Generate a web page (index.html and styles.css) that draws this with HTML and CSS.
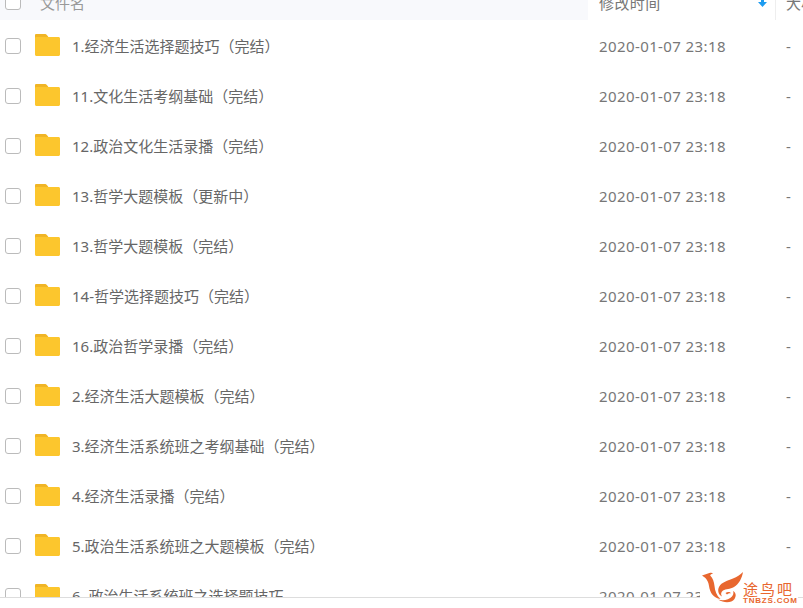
FILE: index.html
```html
<!DOCTYPE html>
<html lang="zh-CN">
<head>
    <meta charset="UTF-8">
    <title>文件列表</title>
    <link rel="stylesheet" href="styles.css">
</head>
<body>
    <svg class="defs" width="0" height="0">
        <symbol id="folder" viewBox="0 0 25 22">
            <path d="M1.500 0h8c1 0 1.600.4 2.200 1l1.600 2h10.200c.8 0 1.500.7 1.500 1.500v16c0 .8-.7 1.500-1.500 1.500h-22C.7 22 0 21.300 0 20.500v-19C0 .7.7 0 1.500 0z" fill="#fcc62d"/>
            <path d="M1.500 0h8c1 0 1.600.4 2.200 1l1.600 2H1.500C.7 3 0 3.500 0 4V1.500C0 .7.7 0 1.500 0z" fill="#f0b526"/>
        </symbol>
    </svg>
    <main class="file-list">
        <div class="list-head">
            <div class="col-name head-name">
                <span class="check"></span>
                <span class="head-label">文件名</span>
            </div>
            <div class="col-time head-time">
                <span>修改时间</span>
                <svg class="sort-arrow" width="9" height="9" viewBox="0 0 9 9"><path d="M3 0h3v4h3L4.500 9 0 4h3z" fill="#1e9cf0"/></svg>
            </div>
            <div class="col-size head-size"><span>大小</span></div>
        </div>
        <div class="row">
            <div class="col-name"><span class="check"></span><svg class="folder"><use href="#folder"/></svg><span class="name">1.经济生活选择题技巧（完结）</span></div>
            <div class="col-time"><span>2020-01-07 23:18</span></div>
            <div class="col-size"><span>-</span></div>
        </div>
        <div class="row">
            <div class="col-name"><span class="check"></span><svg class="folder"><use href="#folder"/></svg><span class="name">11.文化生活考纲基础（完结）</span></div>
            <div class="col-time"><span>2020-01-07 23:18</span></div>
            <div class="col-size"><span>-</span></div>
        </div>
        <div class="row">
            <div class="col-name"><span class="check"></span><svg class="folder"><use href="#folder"/></svg><span class="name">12.政治文化生活录播（完结）</span></div>
            <div class="col-time"><span>2020-01-07 23:18</span></div>
            <div class="col-size"><span>-</span></div>
        </div>
        <div class="row">
            <div class="col-name"><span class="check"></span><svg class="folder"><use href="#folder"/></svg><span class="name">13.哲学大题模板（更新中）</span></div>
            <div class="col-time"><span>2020-01-07 23:18</span></div>
            <div class="col-size"><span>-</span></div>
        </div>
        <div class="row">
            <div class="col-name"><span class="check"></span><svg class="folder"><use href="#folder"/></svg><span class="name">13.哲学大题模板（完结）</span></div>
            <div class="col-time"><span>2020-01-07 23:18</span></div>
            <div class="col-size"><span>-</span></div>
        </div>
        <div class="row">
            <div class="col-name"><span class="check"></span><svg class="folder"><use href="#folder"/></svg><span class="name">14-哲学选择题技巧（完结）</span></div>
            <div class="col-time"><span>2020-01-07 23:18</span></div>
            <div class="col-size"><span>-</span></div>
        </div>
        <div class="row">
            <div class="col-name"><span class="check"></span><svg class="folder"><use href="#folder"/></svg><span class="name">16.政治哲学录播（完结）</span></div>
            <div class="col-time"><span>2020-01-07 23:18</span></div>
            <div class="col-size"><span>-</span></div>
        </div>
        <div class="row">
            <div class="col-name"><span class="check"></span><svg class="folder"><use href="#folder"/></svg><span class="name">2.经济生活大题模板（完结）</span></div>
            <div class="col-time"><span>2020-01-07 23:18</span></div>
            <div class="col-size"><span>-</span></div>
        </div>
        <div class="row">
            <div class="col-name"><span class="check"></span><svg class="folder"><use href="#folder"/></svg><span class="name">3.经济生活系统班之考纲基础（完结）</span></div>
            <div class="col-time"><span>2020-01-07 23:18</span></div>
            <div class="col-size"><span>-</span></div>
        </div>
        <div class="row">
            <div class="col-name"><span class="check"></span><svg class="folder"><use href="#folder"/></svg><span class="name">4.经济生活录播（完结）</span></div>
            <div class="col-time"><span>2020-01-07 23:18</span></div>
            <div class="col-size"><span>-</span></div>
        </div>
        <div class="row">
            <div class="col-name"><span class="check"></span><svg class="folder"><use href="#folder"/></svg><span class="name">5.政治生活系统班之大题模板（完结）</span></div>
            <div class="col-time"><span>2020-01-07 23:18</span></div>
            <div class="col-size"><span>-</span></div>
        </div>
        <div class="row">
            <div class="col-name"><span class="check"></span><svg class="folder"><use href="#folder"/></svg><span class="name">6. 政治生活系统班之选择题技巧</span></div>
            <div class="col-time"><span>2020-01-07 23:18</span></div>
            <div class="col-size"><span>-</span></div>
        </div>
    </main>
    <div class="watermark">
        <svg class="wm-logo" width="41" height="31" viewBox="0 0 41 31">
            <path d="M0 3.500 6 1.500C8 .3 10 .5 11 2c-1.500-.2-2.500.3-2.800 1.500C11 6 12 10 12.500 14c.5 5 2 9.500 6 13-7-1-10.500-6-11.500-13C6.500 10 5 6.500 0 3.500z" fill="#e8672f"/>
            <path d="M41 0c-1 6-4 12-9 15-4 2.500-8 1.500-11 3.500-2 1.300-2.500 3.800-1 6-3-1.500-5-5.500-3-9.500C19.500 10 26 8.500 31 6.500 35 5 38 3 41 0z" fill="#e8672f"/>
            <path d="M16 27.500c5 1.500 11 .5 14-3 1.500-1.800 1.800-3.800 1-5.500 3 1.500 3.500 5 1.500 8-3 4-10 4.500-16.500.5z" fill="#e8672f"/>
            <path d="M23.500 21c2-1.300 4.500-1.200 5.500.2-1.500-.2-3 .3-4 1.300z" fill="#e8672f"/>
        </svg>
        <div class="wm-text">
            <span class="wm-name">途鸟吧</span>
            <span class="wm-site">TNBZS.COM</span>
        </div>
    </div>
</body>
</html>
```

FILE: styles.css
```css
* {
    margin: 0;
    padding: 0;
    box-sizing: border-box;
}

body {
    background: #fff;
    color: #666;
    font-family: "Noto Sans", "Noto Sans CJK SC", sans-serif;
    font-size: 15px;
    height: 608px;
    overflow: hidden;
    position: relative;
}

.defs {
    position: absolute;
}

.file-list {
    height: 598px;
    overflow: hidden;
    border-bottom: 1px solid #ddd;
}

.list-head {
    display: flex;
    height: 36px;
    margin-top: -16px;
    margin-bottom: 1px;
    align-items: stretch;
    background: #f8f9fc;
    color: #999;
}

.head-time {
    background: #fff;
    border-right: 1px solid #eee;
    letter-spacing: 0;
}

.head-size {
    flex: 1;
    display: flex;
    align-items: center;
    background: #fff;
    white-space: nowrap;
    overflow: hidden;
}

.head-label {
    margin-left: 19px;
}

.sort-arrow {
    margin-left: auto;
    margin-right: 8px;
}

.row {
    display: flex;
    height: 50px;
    align-items: center;
}

.col-name {
    width: 588px;
    display: flex;
    align-items: center;
    padding-left: 5px;
}

.col-time {
    width: 188px;
    padding-left: 11px;
    display: flex;
    align-items: center;
    color: #777;
    letter-spacing: 0.4px;
}

.col-size {
    padding-left: 10px;
    color: #777;
}

.check {
    width: 16px;
    height: 16px;
    border: 1px solid #bbb;
    border-radius: 3px;
    background: #fff;
}

.folder {
    width: 25px;
    height: 22px;
    margin-left: 14px;
    margin-top: -2px;
}

.name {
    margin-left: 12px;
    margin-top: -2px;
}

.watermark {
    position: absolute;
    left: 700px;
    top: 570px;
    width: 98px;
    height: 36px;
    padding: 2px 0 0 2px;
    display: flex;
    align-items: flex-start;
    background: #fff;
    color: #e8672f;
}

.wm-text {
    display: flex;
    flex-direction: column;
    align-items: flex-start;
    padding-top: 10px;
    white-space: nowrap;
}

.wm-name {
    font-size: 15px;
    line-height: 15px;
    letter-spacing: 2px;
}

.wm-site {
    font-family: "Liberation Sans", sans-serif;
    font-size: 8px;
    font-weight: 700;
    line-height: 7px;
    letter-spacing: 0.8px;
}
```
